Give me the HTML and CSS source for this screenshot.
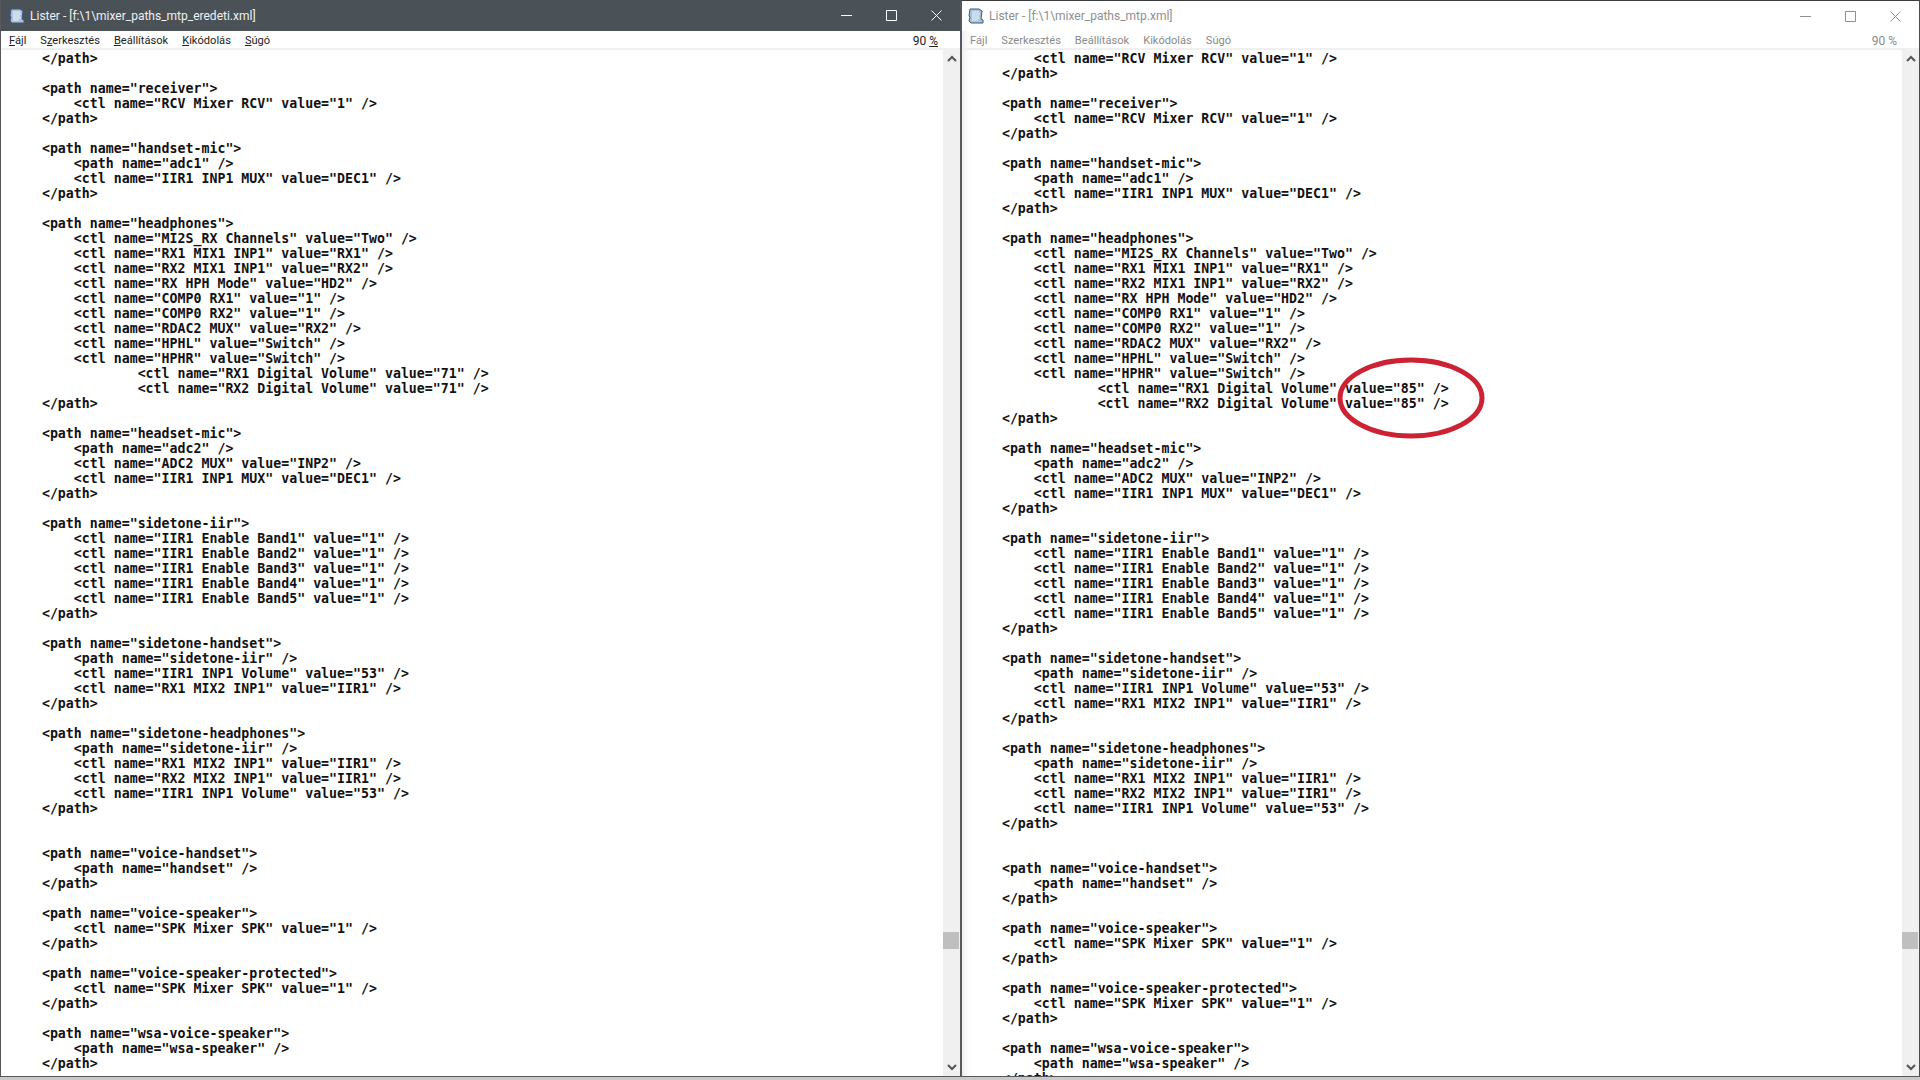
FILE: index.html
```html
<!DOCTYPE html>
<html lang="hu">
<head>
<meta charset="utf-8">
<title>Lister</title>
<link rel="stylesheet" href="styles.css">
</head>
<body>
<div class="desktop">
<section class="window active">
  <header class="titlebar">
    <svg class="app-icon" viewBox="0 0 16 16"><path d="M2 1h9l3 2-1 8 2 1v3H3l-2-2 1-4-1-1z" fill="#a9c2da" stroke="#3a5a7c"/><path d="M4 4h7M4 6h8M4 8h7M4 10h8M4 12h6" stroke="#f2f6fa"/></svg>
    <span class="title">Lister - [f:\1\mixer_paths_mtp_eredeti.xml]</span>
    <div class="controls">
      <svg viewBox="0 0 11 11"><path d="M0 5.500h11"/></svg>
      <svg viewBox="0 0 11 11"><path d="M.5.5h10v10H.5z"/></svg>
      <svg viewBox="0 0 11 11"><path d="M.5.5l10 10M10.500.5l-10 10"/></svg>
    </div>
  </header>
  <nav class="menubar">
    <span class="item"><u>F</u>ájl</span><span class="item">S<u>z</u>erkesztés</span><span class="item"><u>B</u>eállítások</span><span class="item"><u>K</u>ikódolás</span><span class="item"><u>S</u>úgó</span>
    <span class="zoom">90 <u>%</u></span>
  </nav>
  <div class="content">
<pre class="code">    &lt;/path&gt;

    &lt;path name="receiver"&gt;
        &lt;ctl name="RCV Mixer RCV" value="1" /&gt;
    &lt;/path&gt;

    &lt;path name="handset-mic"&gt;
        &lt;path name="adc1" /&gt;
        &lt;ctl name="IIR1 INP1 MUX" value="DEC1" /&gt;
    &lt;/path&gt;

    &lt;path name="headphones"&gt;
        &lt;ctl name="MI2S_RX Channels" value="Two" /&gt;
        &lt;ctl name="RX1 MIX1 INP1" value="RX1" /&gt;
        &lt;ctl name="RX2 MIX1 INP1" value="RX2" /&gt;
        &lt;ctl name="RX HPH Mode" value="HD2" /&gt;
        &lt;ctl name="COMP0 RX1" value="1" /&gt;
        &lt;ctl name="COMP0 RX2" value="1" /&gt;
        &lt;ctl name="RDAC2 MUX" value="RX2" /&gt;
        &lt;ctl name="HPHL" value="Switch" /&gt;
        &lt;ctl name="HPHR" value="Switch" /&gt;
                &lt;ctl name="RX1 Digital Volume" value="71" /&gt;
                &lt;ctl name="RX2 Digital Volume" value="71" /&gt;
    &lt;/path&gt;

    &lt;path name="headset-mic"&gt;
        &lt;path name="adc2" /&gt;
        &lt;ctl name="ADC2 MUX" value="INP2" /&gt;
        &lt;ctl name="IIR1 INP1 MUX" value="DEC1" /&gt;
    &lt;/path&gt;

    &lt;path name="sidetone-iir"&gt;
        &lt;ctl name="IIR1 Enable Band1" value="1" /&gt;
        &lt;ctl name="IIR1 Enable Band2" value="1" /&gt;
        &lt;ctl name="IIR1 Enable Band3" value="1" /&gt;
        &lt;ctl name="IIR1 Enable Band4" value="1" /&gt;
        &lt;ctl name="IIR1 Enable Band5" value="1" /&gt;
    &lt;/path&gt;

    &lt;path name="sidetone-handset"&gt;
        &lt;path name="sidetone-iir" /&gt;
        &lt;ctl name="IIR1 INP1 Volume" value="53" /&gt;
        &lt;ctl name="RX1 MIX2 INP1" value="IIR1" /&gt;
    &lt;/path&gt;

    &lt;path name="sidetone-headphones"&gt;
        &lt;path name="sidetone-iir" /&gt;
        &lt;ctl name="RX1 MIX2 INP1" value="IIR1" /&gt;
        &lt;ctl name="RX2 MIX2 INP1" value="IIR1" /&gt;
        &lt;ctl name="IIR1 INP1 Volume" value="53" /&gt;
    &lt;/path&gt;


    &lt;path name="voice-handset"&gt;
        &lt;path name="handset" /&gt;
    &lt;/path&gt;

    &lt;path name="voice-speaker"&gt;
        &lt;ctl name="SPK Mixer SPK" value="1" /&gt;
    &lt;/path&gt;

    &lt;path name="voice-speaker-protected"&gt;
        &lt;ctl name="SPK Mixer SPK" value="1" /&gt;
    &lt;/path&gt;

    &lt;path name="wsa-voice-speaker"&gt;
        &lt;path name="wsa-speaker" /&gt;
    &lt;/path&gt;</pre>
    <div class="scrollbar">
      <svg class="arrow" viewBox="0 0 10 7"><path d="M1 6l4-4 4 4"/></svg>
      <div class="track"><div class="thumb"></div></div>
      <svg class="arrow" viewBox="0 0 10 7"><path d="M1 1l4 4 4-4"/></svg>
    </div>
  </div>
</section>
<section class="window inactive">
  <header class="titlebar">
    <svg class="app-icon" viewBox="0 0 16 16"><path d="M2 1h9l3 2-1 8 2 1v3H3l-2-2 1-4-1-1z" fill="#a9c2da" stroke="#3a5a7c"/><path d="M4 4h7M4 6h8M4 8h7M4 10h8M4 12h6" stroke="#f2f6fa"/></svg>
    <span class="title">Lister - [f:\1\mixer_paths_mtp.xml]</span>
    <div class="controls">
      <svg viewBox="0 0 11 11"><path d="M0 5.500h11"/></svg>
      <svg viewBox="0 0 11 11"><path d="M.5.5h10v10H.5z"/></svg>
      <svg viewBox="0 0 11 11"><path d="M.5.5l10 10M10.500.5l-10 10"/></svg>
    </div>
  </header>
  <nav class="menubar">
    <span class="item">Fájl</span><span class="item">Szerkesztés</span><span class="item">Beállítások</span><span class="item">Kikódolás</span><span class="item">Súgó</span>
    <span class="zoom">90 %</span>
  </nav>
  <div class="content">
<pre class="code">        &lt;ctl name="RCV Mixer RCV" value="1" /&gt;
    &lt;/path&gt;

    &lt;path name="receiver"&gt;
        &lt;ctl name="RCV Mixer RCV" value="1" /&gt;
    &lt;/path&gt;

    &lt;path name="handset-mic"&gt;
        &lt;path name="adc1" /&gt;
        &lt;ctl name="IIR1 INP1 MUX" value="DEC1" /&gt;
    &lt;/path&gt;

    &lt;path name="headphones"&gt;
        &lt;ctl name="MI2S_RX Channels" value="Two" /&gt;
        &lt;ctl name="RX1 MIX1 INP1" value="RX1" /&gt;
        &lt;ctl name="RX2 MIX1 INP1" value="RX2" /&gt;
        &lt;ctl name="RX HPH Mode" value="HD2" /&gt;
        &lt;ctl name="COMP0 RX1" value="1" /&gt;
        &lt;ctl name="COMP0 RX2" value="1" /&gt;
        &lt;ctl name="RDAC2 MUX" value="RX2" /&gt;
        &lt;ctl name="HPHL" value="Switch" /&gt;
        &lt;ctl name="HPHR" value="Switch" /&gt;
                &lt;ctl name="RX1 Digital Volume" value="85" /&gt;
                &lt;ctl name="RX2 Digital Volume" value="85" /&gt;
    &lt;/path&gt;

    &lt;path name="headset-mic"&gt;
        &lt;path name="adc2" /&gt;
        &lt;ctl name="ADC2 MUX" value="INP2" /&gt;
        &lt;ctl name="IIR1 INP1 MUX" value="DEC1" /&gt;
    &lt;/path&gt;

    &lt;path name="sidetone-iir"&gt;
        &lt;ctl name="IIR1 Enable Band1" value="1" /&gt;
        &lt;ctl name="IIR1 Enable Band2" value="1" /&gt;
        &lt;ctl name="IIR1 Enable Band3" value="1" /&gt;
        &lt;ctl name="IIR1 Enable Band4" value="1" /&gt;
        &lt;ctl name="IIR1 Enable Band5" value="1" /&gt;
    &lt;/path&gt;

    &lt;path name="sidetone-handset"&gt;
        &lt;path name="sidetone-iir" /&gt;
        &lt;ctl name="IIR1 INP1 Volume" value="53" /&gt;
        &lt;ctl name="RX1 MIX2 INP1" value="IIR1" /&gt;
    &lt;/path&gt;

    &lt;path name="sidetone-headphones"&gt;
        &lt;path name="sidetone-iir" /&gt;
        &lt;ctl name="RX1 MIX2 INP1" value="IIR1" /&gt;
        &lt;ctl name="RX2 MIX2 INP1" value="IIR1" /&gt;
        &lt;ctl name="IIR1 INP1 Volume" value="53" /&gt;
    &lt;/path&gt;


    &lt;path name="voice-handset"&gt;
        &lt;path name="handset" /&gt;
    &lt;/path&gt;

    &lt;path name="voice-speaker"&gt;
        &lt;ctl name="SPK Mixer SPK" value="1" /&gt;
    &lt;/path&gt;

    &lt;path name="voice-speaker-protected"&gt;
        &lt;ctl name="SPK Mixer SPK" value="1" /&gt;
    &lt;/path&gt;

    &lt;path name="wsa-voice-speaker"&gt;
        &lt;path name="wsa-speaker" /&gt;
    &lt;/path&gt;</pre>
    <div class="scrollbar">
      <svg class="arrow" viewBox="0 0 10 7"><path d="M1 6l4-4 4 4"/></svg>
      <div class="track"><div class="thumb"></div></div>
      <svg class="arrow" viewBox="0 0 10 7"><path d="M1 1l4 4 4-4"/></svg>
    </div>
    <svg class="mark" viewBox="0 0 150 84"><ellipse cx="75" cy="42" rx="71" ry="38"/></svg>
  </div>
</section>
</div>
</body>
</html>
```
FILE: styles.css
```css
* { box-sizing: border-box; }
html, body { margin: 0; height: 100%; background: #c9c9c9; overflow: hidden; }
.desktop { display: flex; height: 1077px; border-bottom: 1px solid #55585a; }
.window { width: 960px; display: flex; flex-direction: column; background: #fff; border-left: 1px solid #55595c; position: relative; }
.inactive { border-left-width: 2px; border-right: 1px solid #4a4d50; border-top: 1px solid #3a3d40; box-shadow: inset 12px 0 12px -12px #00000022; }
.titlebar { height: 31px; flex: none; display: flex; align-items: center; padding-left: 8px; font: 12px/1 Roboto, sans-serif; }
.active .titlebar { background: #4a5157; color: #f0f2f3; }
.inactive .titlebar { height: 30px; background: #fff; color: #8f8f8f; padding-left: 6px; }
.app-icon { width: 16px; height: 16px; margin-right: 5px; flex: none; }
.title { flex: 1; white-space: nowrap; }
.controls { display: flex; gap: 34px; padding-right: 18px; }
.controls svg { width: 11px; height: 11px; fill: none; stroke-width: 1; }
.active .controls svg { stroke: #fff; }
.inactive .controls svg { stroke: #8f8f8f; }
.menubar { height: 19px; flex: none; display: flex; align-items: center; gap: 14px; padding: 2px 22px 0 8px; border-bottom: 2px solid #f0f0f0; font: 11.1px/1 Roboto, sans-serif; color: #222; }
.inactive .menubar { color: #8a8a8a; }
.zoom { margin-left: auto; font-size: 12px; }
.content { flex: 1; min-height: 0; display: flex; position: relative; }
.code { flex: 1; min-width: 0; margin: 0; height: 100%; overflow: hidden; padding: 1px 0 0 9px; font: bold 13.25px/15px "DejaVu Sans Mono", monospace; color: #111; }
.inactive .code { padding-left: 8px; }
.scrollbar { width: 17px; flex: none; background: #f0f0f0; display: flex; flex-direction: column; align-items: center; }
.arrow { width: 10px; height: 7px; margin: 5px 0; flex: none; fill: none; stroke: #555; stroke-width: 2; }
.track { flex: 1; width: 100%; position: relative; }
.thumb { position: absolute; left: 0; right: 1px; bottom: 110px; height: 17px; background: #bfbfbf; }
.mark { position: absolute; left: 374px; top: 306px; width: 150px; height: 84px; fill: none; stroke: #cc2233; stroke-width: 5; }
```
